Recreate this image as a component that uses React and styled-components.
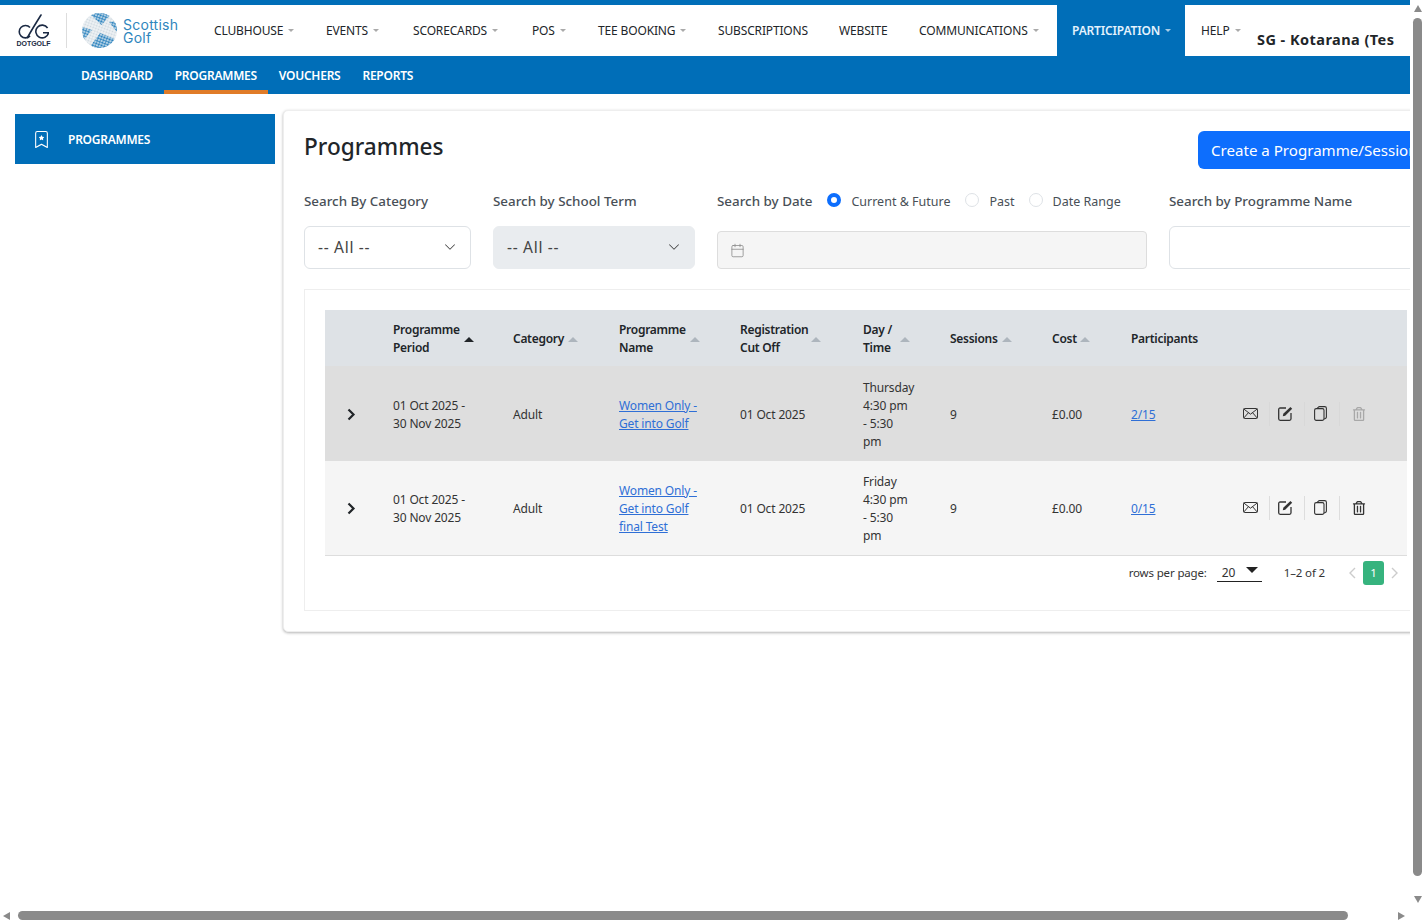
import React from "react";
import styled, { createGlobalStyle } from "styled-components";
import { BsBookmarkStar, BsChevronDown } from "react-icons/bs";
import { FaRegTrashAlt } from "react-icons/fa";
import { Calendar } from "lucide-react";

const BLUE = "#006eb8";
const BAR = "#8a8a8a";

const GlobalStyle = createGlobalStyle`
  html, body { overflow: hidden; }
  body {
    margin: 0;
    background: #fff;
    color: #212529;
    font-family: "Noto Sans", "Open Sans", sans-serif;
    font-size: 12px;
  }
`;

const Viewport = styled.div`
  position: relative;
  width: 1425px;
  height: 923px;
  overflow: hidden;
`;

const Page = styled.div`
  width: 1456px;
`;

const VerticalBar = styled.div`
  position: absolute;
  top: 0;
  right: 0;
  display: flex;
  flex-direction: column;
  align-items: center;
  justify-content: space-between;
  box-sizing: border-box;
  width: 15px;
  height: 908px;
  padding: 5px 0;
  background: #fff;
`;

const VerticalThumb = styled.div`
  width: 9px;
  height: 858px;
  margin-top: 6px;
  margin-bottom: auto;
  border-radius: 5px;
  background: ${BAR};
`;

const HorizontalBar = styled.div`
  position: absolute;
  left: 0;
  bottom: 0;
  display: flex;
  align-items: center;
  box-sizing: border-box;
  width: 1425px;
  height: 15px;
  padding: 0 20px 0 3px;
  background: #fff;
`;

const HorizontalThumb = styled.div`
  width: 1330px;
  height: 9px;
  margin-left: 8px;
  margin-right: auto;
  border-radius: 5px;
  background: ${BAR};
`;

const Triangle = styled.span`
  flex: none;
  width: 0;
  height: 0;
  ${(p) =>
    p.$dir === "up" &&
    `border-left: 4.5px solid transparent; border-right: 4.5px solid transparent; border-bottom: 7px solid ${BAR};`}
  ${(p) =>
    p.$dir === "down" &&
    `border-left: 4.5px solid transparent; border-right: 4.5px solid transparent; border-top: 7px solid ${BAR};`}
  ${(p) =>
    p.$dir === "left" &&
    `border-top: 4.5px solid transparent; border-bottom: 4.5px solid transparent; border-right: 7px solid ${BAR};`}
  ${(p) =>
    p.$dir === "right" &&
    `border-top: 4.5px solid transparent; border-bottom: 4.5px solid transparent; border-left: 7px solid ${BAR};`}
`;

const TopNav = styled.header`
  display: flex;
  height: 51px;
  border-top: 5px solid ${BLUE};
  background: #fff;
`;

const Brand = styled.div`
  display: flex;
  align-items: center;
  width: 180px;
  padding-left: 18px;
`;

const DotGolf = styled.div`
  display: flex;
  flex-direction: column;
  align-items: center;
  width: 31px;
`;

const DotGolfName = styled.span`
  margin-top: 1px;
  font-family: "Liberation Sans", sans-serif;
  font-size: 7px;
  font-weight: 700;
  line-height: 7px;
  color: #1b2a44;
`;

const BrandRule = styled.span`
  width: 1px;
  height: 35px;
  margin: 0 15px 0 17px;
  background: #ddd;
`;

const GolfName = styled.span`
  margin-left: 6px;
  font-family: Inter, sans-serif;
  font-size: 14px;
  line-height: 13px;
  letter-spacing: 0.25px;
  color: #2f86bd;
`;

const NavItem = styled.div`
  display: flex;
  align-items: center;
  flex: none;
  box-sizing: border-box;
  width: ${(p) => p.$width}px;
  height: 51px;
  padding-left: ${(p) => (p.$active ? 15 : 16)}px;
  white-space: nowrap;
  font-size: 12px;
  letter-spacing: -0.15px;
  font-weight: ${(p) => (p.$active ? 600 : 400)};
  color: ${(p) => (p.$active ? "#e3f2fd" : "#212529")};
  background: ${(p) => (p.$active ? BLUE : "transparent")};
`;

const Caret = styled.span`
  width: 0;
  height: 0;
  margin-left: 5px;
  border-left: 3px solid transparent;
  border-right: 3px solid transparent;
  border-top: 3px solid ${(p) => (p.$light ? "#a9cde6" : "#aaa")};
`;

const AccountName = styled.div`
  margin-top: 24px;
  white-space: nowrap;
  font-size: 14.5px;
  font-weight: 700;
  letter-spacing: 0.45px;
  line-height: 20px;
  color: #212529;
`;

const SubNav = styled.nav`
  display: flex;
  height: 38px;
  padding-left: 70px;
  background: ${BLUE};
`;

const SubItem = styled.div`
  display: flex;
  align-items: center;
  box-sizing: border-box;
  padding: 0 11px;
  font-size: 12px;
  font-weight: 600;
  letter-spacing: -0.25px;
  color: #fff;
  border-bottom: 4px solid ${(p) => (p.$active ? "#e07b28" : "transparent")};
  border-top: 4px solid transparent;
`;

const Body = styled.div`
  display: flex;
  align-items: flex-start;
  gap: 8px;
  padding: 16px 8px 0 15px;
`;

const Sidebar = styled.aside`
  width: 260px;
  margin-top: 4px;
`;

const SideItem = styled.div`
  display: flex;
  align-items: center;
  gap: 18px;
  height: 50px;
  padding-left: 18px;
  background: ${BLUE};
  color: #fff;
  font-weight: 600;
  font-size: 12px;
  letter-spacing: -0.25px;
`;

const Card = styled.main`
  width: 1165px;
  box-sizing: border-box;
  padding: 20px;
  background: #fff;
  border: 1px solid #eee;
  border-radius: 5px;
  box-shadow: 0 1px 3px rgba(0, 0, 0, 0.3);
`;

const CardHead = styled.div`
  display: flex;
  justify-content: space-between;
  align-items: flex-start;
`;

const Title = styled.h1`
  margin: 0;
  font-size: 22.6px;
  font-weight: 500;
  line-height: 32px;
  color: #212529;
`;

const CreateButton = styled.button`
  width: 229px;
  height: 38px;
  padding: 0 13px;
  border: 0;
  border-radius: 6px 0 0 6px;
  background: #0d6efd;
  color: #fff;
  font: inherit;
  font-size: 15.1px;
  text-align: left;
  white-space: nowrap;
`;

const Filters = styled.div`
  display: grid;
  grid-template-columns: 167px 202px 430px 259px;
  gap: 22px;
  margin-top: 21px;
`;

const Filter = styled.div`
  display: flex;
  flex-direction: column;
  justify-content: space-between;
  height: 79px;
`;

const LabelRow = styled.div`
  display: flex;
  align-items: center;
  height: 22px;
`;

const Label = styled.label`
  font-size: 13.4px;
  font-weight: 500;
  color: #495057;
  white-space: nowrap;
`;

const RadioOption = styled.label`
  display: flex;
  align-items: center;
  gap: 10px;
  margin-left: ${(p) => p.$left}px;
  font-size: 12.5px;
  color: #495057;
  white-space: nowrap;
`;

const Radio = styled.input.attrs({ type: "radio" })`
  appearance: none;
  box-sizing: border-box;
  width: 14px;
  height: 14px;
  margin: -3px 0 0;
  border-radius: 50%;
  border: 1px solid #dee2e6;
  background: #fff;
  &:checked {
    border: 4px solid #0d6efd;
  }
`;

const SelectBox = styled.div`
  display: flex;
  align-items: center;
  justify-content: space-between;
  box-sizing: border-box;
  height: 43px;
  padding: 0 14px 2px 13px;
  border: 1px solid ${(p) => (p.$disabled ? "#e9ecef" : "#dee2e6")};
  border-radius: 6px;
  background: ${(p) => (p.$disabled ? "#e9ecef" : "#fff")};
  font-size: 15.5px;
  letter-spacing: 0.7px;
  color: #444;
`;

const DateBox = styled.div`
  display: flex;
  align-items: center;
  box-sizing: border-box;
  height: 38px;
  padding-left: 12px;
  border: 1px solid #ddd;
  border-radius: 4px;
  background: #f5f5f5;
  color: #888;
`;

const TextBox = styled.div`
  box-sizing: border-box;
  height: 43px;
  border: 1px solid #dee2e6;
  border-radius: 6px;
  background: #fff;
`;

const TablePanel = styled.section`
  margin-top: 20px;
  padding: 20px 20px 20px;
  border: 1px solid #eee;
`;

const Table = styled.table`
  width: 1082px;
  table-layout: fixed;
  border-collapse: collapse;
`;

const HeadRow = styled.tr`
  height: 56px;
  background: #dee2e6;
`;

const HeadCell = styled.th`
  padding: 2px 0 0 12px;
  text-align: left;
  font-size: 12px;
  font-weight: 600;
  letter-spacing: -0.28px;
  line-height: 18px;
  color: #212529;
`;

const HeadInner = styled.div`
  display: flex;
  align-items: center;
`;

const SortArrow = styled.span`
  flex: none;
  width: 0;
  height: 0;
  margin-left: ${(p) => p.$gap}px;
  border-left: 5px solid transparent;
  border-right: 5px solid transparent;
  border-bottom: 5px solid ${(p) => (p.$active ? "#212529" : "#adb5bd")};
`;

const Row = styled.tr`
  height: ${(p) => (p.$selected ? 95 : 94)}px;
  background: ${(p) => (p.$selected ? "#dedede" : "#f5f5f5")};
  border-bottom: ${(p) => (p.$selected ? "0" : "1px solid #ddd")};
`;

const Cell = styled.td`
  padding: 2px 0 0 12px;
  font-size: 12px;
  letter-spacing: -0.15px;
  line-height: 18px;
  color: #333;
`;

const ExpandCell = styled.td`
  padding: 5px 0 0 22px;
  color: #212529;
`;

const ActionsCell = styled.td`
  padding: 0 0 0 5px;
`;

const RowLink = styled.a`
  color: #2f6fd6;
  text-decoration: underline;
`;

const Actions = styled.div`
  display: flex;
`;

const ActionButton = styled.span`
  display: flex;
  align-items: center;
  justify-content: center;
  box-sizing: border-box;
  width: 35px;
  height: 24px;
  padding: ${(p) => (p.$last ? "0 0 0 3px" : "0 3px 0 0")};
  border-right: ${(p) => (p.$last ? "0" : `1px solid ${p.$faded ? "#d8d8d8" : "#ddd"}`)};
  color: ${(p) => (p.$off ? "#a8a8a8" : "#333")};
`;

const Pager = styled.div`
  display: flex;
  align-items: center;
  justify-content: flex-end;
  width: 1082px;
  height: 34px;
  font-size: 11.5px;
  letter-spacing: -0.15px;
  color: #333;
`;

const RowsSelect = styled.div`
  display: flex;
  align-items: center;
  justify-content: space-between;
  box-sizing: border-box;
  width: 45px;
  height: 18px;
  margin: 0 22px 0 10px;
  padding: 0 4px 0 5px;
  border-bottom: 1px solid #222;
  font-size: 12px;
`;

const DownTriangle = styled.span`
  width: 0;
  height: 0;
  margin-bottom: 4px;
  border-left: 6px solid transparent;
  border-right: 6px solid transparent;
  border-top: 6px solid #222;
`;

const PageArrow = styled.span`
  display: flex;
  margin: 0 ${(p) => p.$right}px 0 ${(p) => p.$left}px;
  color: #ccc;
`;

const PageNumber = styled.span`
  display: flex;
  align-items: center;
  justify-content: center;
  width: 21px;
  height: 24px;
  margin: 0 7px;
  border-radius: 3px;
  background: #36b37e;
  color: #fff;
`;

const ArrowSvg = ({ flip }) => (
  <svg width="8" height="12" viewBox="0 0 8 12" fill="none" stroke="currentColor" strokeWidth="1.4">
    <path d={flip ? "M7 1 2 6l5 5" : "M1 1l5 5-5 5"} />
  </svg>
);

const DotGolfMark = () => (
  <svg width="31" height="25" viewBox="0 0 31 25" fill="none" stroke="#1b2a44" strokeWidth="1.6">
    <path d="M12 13.5a6.2 6.2 0 1 0 0 8.4" />
    <path d="M9.5 23.5C13 17 18 9 23 1" strokeLinecap="round" />
    <path d="M29.6 14a6.4 6.4 0 1 0 0.9 4.8h-5.5" />
  </svg>
);

const GlobeMark = () => (
  <svg width="35" height="35" viewBox="0 0 35 35">
    <defs>
      <pattern id="dots" width="2.8" height="2.8" patternUnits="userSpaceOnUse" patternTransform="rotate(20)">
        <circle cx="1.4" cy="1.4" r="1.2" fill="#1f7dbd" />
      </pattern>
      <pattern id="paleDots" width="2.8" height="2.8" patternUnits="userSpaceOnUse" patternTransform="rotate(20)">
        <circle cx="1.4" cy="1.4" r="1" fill="#ccd6de" />
      </pattern>
      <clipPath id="ball">
        <circle cx="17.5" cy="17.5" r="17.5" />
      </clipPath>
    </defs>
    <g clipPath="url(#ball)">
      <rect width="35" height="35" fill="#f1f4f6" />
      <rect width="35" height="35" fill="url(#paleDots)" />
      <path d="M7 0h23L19.5 12zM27 9l8-1v11zM0 14l10 3-9 11zM7 35l11-15 17 7v8z" fill="url(#dots)" />
    </g>
  </svg>
);

const MailIcon = () => (
  <svg width="15" height="11" viewBox="0 0 15 11" fill="none" stroke="currentColor" strokeWidth="1">
    <rect x="0.5" y="0.5" width="14" height="10" rx="1" />
    <path d="M0.8 1 7.5 6.2 14.2 1M0.8 10 5.5 4.6M14.2 10 9.5 4.6" />
  </svg>
);

const EditIcon = () => (
  <svg width="15" height="15" viewBox="0 0 15 15" fill="none" stroke="currentColor">
    <path d="M8 2H2.2C1.3 2 .7 2.6.7 3.5v9.3c0 .9.6 1.5 1.5 1.5h9.3c.9 0 1.5-.6 1.5-1.5V7" strokeWidth="1.3" />
    <path d="M4.8 10.2l.5-2.4L12.4.9l1.8 1.8-7 7z" fill="currentColor" stroke="none" />
  </svg>
);

const CopyIcon = () => (
  <svg width="13" height="15" viewBox="0 0 13 15" fill="none" stroke="currentColor" strokeWidth="1.1">
    <rect x="0.6" y="2.6" width="9.4" height="11.8" rx="1.6" />
    <path d="M3.2 2.4 4.4 1.2c.3-.4.6-.6 1.1-.6h5.2c1 0 1.7.7 1.7 1.7v8.6c0 .7-.4 1.2-1 1.5L10 13" />
  </svg>
);

const navItems = [
  { label: "CLUBHOUSE", caret: true, width: 112 },
  { label: "EVENTS", caret: true, width: 87 },
  { label: "SCORECARDS", caret: true, width: 119 },
  { label: "POS", caret: true, width: 66 },
  { label: "TEE BOOKING", caret: true, width: 120 },
  { label: "SUBSCRIPTIONS", width: 121 },
  { label: "WEBSITE", width: 80 },
  { label: "COMMUNICATIONS", caret: true, width: 154 },
];

const columns = [
  { lines: ["Programme", "Period"], gap: 4, active: true, width: 120 },
  { lines: ["Category"], gap: 4, width: 106 },
  { lines: ["Programme", "Name"], gap: 4, width: 121 },
  { lines: ["Registration", "Cut Off"], gap: 3, width: 123 },
  { lines: ["Day /", "Time"], gap: 8, width: 87 },
  { lines: ["Sessions"], gap: 4, width: 102 },
  { lines: ["Cost"], gap: 3, width: 79 },
  { lines: ["Participants"], noSort: true, width: 111 },
];

const rows = [
  {
    name: ["Women Only -", "Get into Golf"],
    day: ["Thursday", "4:30 pm", "- 5:30", "pm"],
    participants: "2/15",
    selected: true,
  },
  {
    name: ["Women Only -", "Get into Golf", "final Test"],
    day: ["Friday", "4:30 pm", "- 5:30", "pm"],
    participants: "0/15",
  },
];

const Lines = ({ lines }) =>
  lines.map((line, i) => (
    <React.Fragment key={line}>
      {i > 0 && <br />}
      {line}
    </React.Fragment>
  ));

export default function App() {
  return (
    <Viewport>
      <GlobalStyle />
      <Page>
        <TopNav>
          <Brand>
            <DotGolf>
              <DotGolfMark />
              <DotGolfName>DOTGOLF</DotGolfName>
            </DotGolf>
            <BrandRule />
            <GlobeMark />
            <GolfName>
              Scottish
              <br />
              Golf
            </GolfName>
          </Brand>
          {navItems.map((item) => (
            <NavItem key={item.label} $width={item.width}>
              {item.label}
              {item.caret && <Caret />}
            </NavItem>
          ))}
          <NavItem $active $width={128}>
            PARTICIPATION
            <Caret $light />
          </NavItem>
          <NavItem $width={72}>
            HELP
            <Caret />
          </NavItem>
          <AccountName>SG - Kotarana (Tes</AccountName>
        </TopNav>
        <SubNav>
          <SubItem>DASHBOARD</SubItem>
          <SubItem $active>PROGRAMMES</SubItem>
          <SubItem>VOUCHERS</SubItem>
          <SubItem>REPORTS</SubItem>
        </SubNav>
        <Body>
          <Sidebar>
            <SideItem>
              <BsBookmarkStar size={17} />
              PROGRAMMES
            </SideItem>
          </Sidebar>
          <Card>
            <CardHead>
              <Title>Programmes</Title>
              <CreateButton>Create a Programme/Session</CreateButton>
            </CardHead>
            <Filters>
              <Filter>
                <LabelRow>
                  <Label>Search By Category</Label>
                </LabelRow>
                <SelectBox>
                  -- All --
                  <BsChevronDown size={12} color="#333" />
                </SelectBox>
              </Filter>
              <Filter>
                <LabelRow>
                  <Label>Search by School Term</Label>
                </LabelRow>
                <SelectBox $disabled>
                  -- All --
                  <BsChevronDown size={12} color="#333" />
                </SelectBox>
              </Filter>
              <Filter>
                <LabelRow>
                  <Label>Search by Date</Label>
                  <RadioOption $left={15}>
                    <Radio name="date" defaultChecked />
                    Current &amp; Future
                  </RadioOption>
                  <RadioOption $left={15}>
                    <Radio name="date" />
                    Past
                  </RadioOption>
                  <RadioOption $left={14}>
                    <Radio name="date" />
                    Date Range
                  </RadioOption>
                </LabelRow>
                <DateBox>
                  <Calendar size={15} strokeWidth={1.25} />
                </DateBox>
              </Filter>
              <Filter>
                <LabelRow>
                  <Label>Search by Programme Name</Label>
                </LabelRow>
                <TextBox />
              </Filter>
            </Filters>
            <TablePanel>
              <Table>
                <colgroup>
                  <col style={{ width: 56 }} />
                  {columns.map((c) => (
                    <col key={c.lines[0] + c.width} style={{ width: c.width }} />
                  ))}
                  <col />
                </colgroup>
                <thead>
                  <HeadRow>
                    <HeadCell />
                    {columns.map((c) => (
                      <HeadCell key={c.lines[0] + c.width}>
                        <HeadInner>
                          <span>
                            <Lines lines={c.lines} />
                          </span>
                          {!c.noSort && <SortArrow $gap={c.gap} $active={c.active} />}
                        </HeadInner>
                      </HeadCell>
                    ))}
                    <HeadCell />
                  </HeadRow>
                </thead>
                <tbody>
                  {rows.map((r) => (
                    <Row key={r.participants} $selected={r.selected}>
                      <ExpandCell>
                        <svg width="9" height="13" viewBox="0 0 9 13" fill="none" stroke="currentColor" strokeWidth="2.2">
                          <path d="M1.5 1.5 6.5 6.5l-5 5" />
                        </svg>
                      </ExpandCell>
                      <Cell>
                        01 Oct 2025 -<br />
                        30 Nov 2025
                      </Cell>
                      <Cell>Adult</Cell>
                      <Cell>
                        <RowLink href="#">
                          <Lines lines={r.name} />
                        </RowLink>
                      </Cell>
                      <Cell>01 Oct 2025</Cell>
                      <Cell>
                        <Lines lines={r.day} />
                      </Cell>
                      <Cell>9</Cell>
                      <Cell>£0.00</Cell>
                      <Cell>
                        <RowLink href="#">{r.participants}</RowLink>
                      </Cell>
                      <ActionsCell>
                        <Actions>
                          <ActionButton $faded={r.selected}>
                            <MailIcon />
                          </ActionButton>
                          <ActionButton $faded={r.selected}>
                            <EditIcon />
                          </ActionButton>
                          <ActionButton $faded={r.selected}>
                            <CopyIcon />
                          </ActionButton>
                          <ActionButton $last $off={r.selected}>
                            <FaRegTrashAlt size={14} />
                          </ActionButton>
                        </Actions>
                      </ActionsCell>
                    </Row>
                  ))}
                </tbody>
              </Table>
              <Pager>
                rows per page:
                <RowsSelect>
                  20
                  <DownTriangle />
                </RowsSelect>
                1–2 of 2
                <PageArrow $left={23} $right={0}>
                  <ArrowSvg flip />
                </PageArrow>
                <PageNumber>1</PageNumber>
                <PageArrow $left={0} $right={8}>
                  <ArrowSvg />
                </PageArrow>
              </Pager>
            </TablePanel>
          </Card>
        </Body>
      </Page>
      <VerticalBar>
        <Triangle $dir="up" />
        <VerticalThumb />
        <Triangle $dir="down" />
      </VerticalBar>
      <HorizontalBar>
        <Triangle $dir="left" />
        <HorizontalThumb />
        <Triangle $dir="right" />
      </HorizontalBar>
    </Viewport>
  );
}
